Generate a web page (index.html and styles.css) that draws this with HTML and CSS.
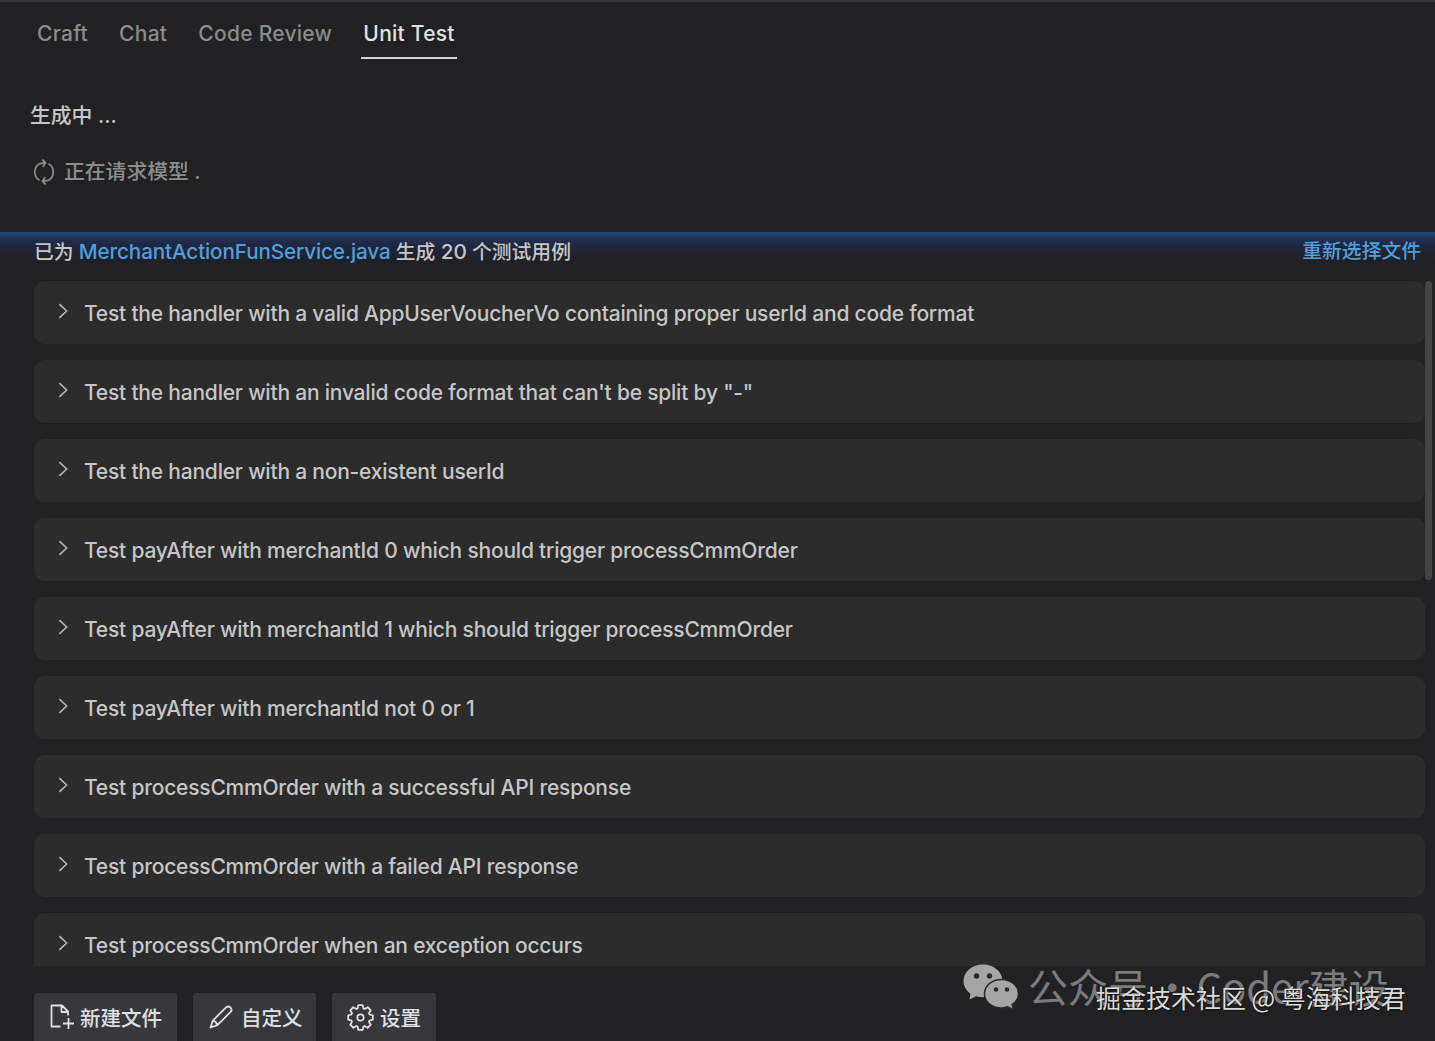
FILE: index.html
```html
<!DOCTYPE html>
<html lang="zh-CN">
<head>
    <meta charset="UTF-8">
    <meta name="viewport" content="width=device-width, initial-scale=1.0">
    <title>Unit Test</title>
    <link rel="stylesheet" href="styles.css">
</head>
<body>
    <div class="panel">
        <nav class="tabs">
            <a class="tab">Craft</a>
            <a class="tab">Chat</a>
            <a class="tab">Code Review</a>
            <a class="tab active">Unit Test</a>
        </nav>

        <div class="status">
            <div class="status-title">生成中 ...</div>
            <div class="status-step">
                <svg class="sync" width="24" height="28" viewBox="0 0 24 28">
                    <path d="M8.5 5.2A9.6 9.6 0 0 0 7.4 22.2M15.5 22.8A9.6 9.6 0 0 0 16.6 5.8M7.5 5.6L13 4.8M16.5 22.4L11 23.2M10.3 1.5L13.6 4.8L10.8 8.8M13.7 26.5L10.4 23.2L13.2 19.2"/>
                </svg>
                <span>正在请求模型 .</span>
            </div>
        </div>

        <div class="result">
            <div class="result-head">
                <div class="summary">已为 <a class="file">MerchantActionFunService.java</a> 生成 <span class="count">20</span> 个测试用例</div>
                <a class="reselect">重新选择文件</a>
            </div>
            <div class="cases">
                <div class="case"><svg class="arrow" viewBox="0 0 12 18"><path d="M1.5 1.5L9.5 9L1.5 16.5"/></svg><span>Test the handler with a valid AppUserVoucherVo containing proper userId and code format</span></div>
                <div class="case"><svg class="arrow" viewBox="0 0 12 18"><path d="M1.5 1.5L9.5 9L1.5 16.5"/></svg><span>Test the handler with an invalid code format that can't be split by "-"</span></div>
                <div class="case"><svg class="arrow" viewBox="0 0 12 18"><path d="M1.5 1.5L9.5 9L1.5 16.5"/></svg><span>Test the handler with a non-existent userId</span></div>
                <div class="case"><svg class="arrow" viewBox="0 0 12 18"><path d="M1.5 1.5L9.5 9L1.5 16.5"/></svg><span>Test payAfter with merchantId 0 which should trigger processCmmOrder</span></div>
                <div class="case"><svg class="arrow" viewBox="0 0 12 18"><path d="M1.5 1.5L9.5 9L1.5 16.5"/></svg><span>Test payAfter with merchantId 1 which should trigger processCmmOrder</span></div>
                <div class="case"><svg class="arrow" viewBox="0 0 12 18"><path d="M1.5 1.5L9.5 9L1.5 16.5"/></svg><span>Test payAfter with merchantId not 0 or 1</span></div>
                <div class="case"><svg class="arrow" viewBox="0 0 12 18"><path d="M1.5 1.5L9.5 9L1.5 16.5"/></svg><span>Test processCmmOrder with a successful API response</span></div>
                <div class="case"><svg class="arrow" viewBox="0 0 12 18"><path d="M1.5 1.5L9.5 9L1.5 16.5"/></svg><span>Test processCmmOrder with a failed API response</span></div>
                <div class="case"><svg class="arrow" viewBox="0 0 12 18"><path d="M1.5 1.5L9.5 9L1.5 16.5"/></svg><span>Test processCmmOrder when an exception occurs</span></div>
                <div class="scrollbar"></div>
            </div>
        </div>

        <div class="actions">
            <button class="btn btn-new">
                <svg width="24" height="26" viewBox="0 0 24 26"><path d="M10.5 22.5H1.5V1.5H12L18 7.5V11.5M11.5 1.5V8H18M18.5 14V25M13 19.5H24"/></svg>
                <span>新建文件</span>
            </button>
            <button class="btn btn-custom">
                <svg width="24" height="24" viewBox="0 0 24 24"><path d="M1.5 22.5L3.8 15.6L17.3 2.2Q19.3 .6 21.5 2.5Q23.5 4.7 21.8 6.7L8.4 20.2ZM3.8 15.6Q7.4 16.4 8.4 20.2"/></svg>
                <span>自定义</span>
            </button>
            <button class="btn btn-set">
                <svg width="27" height="27" viewBox="-13.5 -13.5 27 27"><path d="M-3-9L-2.2-12.3H2.2L3-9L4.24-8.49L7.14-10.25L10.25-7.14L8.49-4.24L9-3L12.3-2.2V2.2L9 3L8.49 4.24L10.25 7.14L7.14 10.25L4.24 8.49L3 9L2.2 12.3H-2.2L-3 9L-4.24 8.49L-7.14 10.25L-10.25 7.14L-8.49 4.24L-9 3L-12.3 2.2V-2.2L-9-3L-8.49-4.24L-10.25-7.14L-7.14-10.25L-4.24-8.49Z"/><circle r="3.2"/></svg>
                <span>设置</span>
            </button>
        </div>

        <div class="account">
            <svg width="56" height="46" viewBox="0 0 56 46">
                <path class="bubble" d="M20 .5C9 .5.5 7.8.5 17C.5 22 3 26.5 7.5 29.7L6.5 35.5L13 32.3C15.3 33 17.6 33.2 20 33.2C31 33.2 39.5 26 39.5 17S31 .5 20 .5Z"/>
                <path class="bubble front" d="M38.5 15.5C28.8 15.5 21.5 21.8 21.5 29.8S28.8 44 38.5 44C40.8 44 43 43.6 45 42.8L50.5 45.6L49 40.6C53 38 55.5 34.2 55.5 29.8C55.5 21.8 48 15.5 38.5 15.5Z"/>
                <g class="eyes"><circle cx="13.5" cy="12" r="2.7"/><circle cx="26.5" cy="12" r="2.7"/><circle cx="33" cy="25.5" r="2.3"/><circle cx="44" cy="25.5" r="2.3"/></g>
            </svg>
            <span>公众号 · Coder建设</span>
        </div>
        <div class="community">掘金技术社区 @ 粤海科技君</div>
    </div>
</body>
</html>
```
FILE: styles.css
```css
* {
    box-sizing: border-box;
}
body {
    margin: 0;
    background-color: #212123;
    font-family: Inter, "Noto Sans CJK SC", sans-serif;
    font-size: 21px;
    color: #c6c6c6;
}
svg {
    flex: none;
    fill: none;
    stroke: currentColor;
    stroke-width: 1.8;
    stroke-linejoin: round;
}
.panel {
    position: relative;
    display: flex;
    flex-direction: column;
    height: 1041px;
    overflow: hidden;
    border-top: 2px solid #333436;
}
.tabs {
    display: flex;
    flex: none;
    gap: 27.1px;
    height: 57px;
    padding-left: 35px;
}
.tab {
    height: 57px;
    padding: 0 2px;
    line-height: 64px;
    color: #8c8c8c;
    font-weight: 500;
    letter-spacing: .26px;
    white-space: nowrap;
}
.tab.active {
    color: #e2e2e2;
    border-bottom: 2px solid #d5d5d8;
}
.status {
    flex: none;
    height: 173px;
    padding: 42px 0 0 30px;
    font-size: 20.8px;
    font-weight: 500;
}
.status-title {
    line-height: 30px;
}
.status-step {
    display: flex;
    align-items: center;
    gap: 8px;
    margin: 26px 0 0 2px;
    line-height: 30px;
    color: #8c8c8c;
}
.result {
    display: flex;
    flex: none;
    flex-direction: column;
    height: 734px;
    background: linear-gradient(#23477f 0, #212f51 7px, #20263a 15px, #202129 27px, #212123 44px);
}
.result-head {
    display: flex;
    justify-content: space-between;
    height: 49px;
    padding: 0 14px 0 34px;
    line-height: 39px;
    font-size: 19.8px;
    font-weight: 500;
    white-space: nowrap;
}
.file,
.count {
    font-size: 20.7px;
    font-weight: 450;
}
.file {
    letter-spacing: -.14px;
}
.file,
.reselect {
    color: #4f9fdd;
}
.cases {
    position: relative;
    display: flex;
    flex-direction: column;
    gap: 16.05px;
    flex: 1;
    min-height: 0;
    padding: 0 10px 0 34px;
    overflow: hidden;
}
.case {
    display: flex;
    flex: none;
    gap: 15px;
    height: 63px;
    padding-left: 24px;
    border-radius: 11px;
    background-color: #2c2c2c;
    line-height: 65px;
    font-weight: 450;
    letter-spacing: -.21px;
    white-space: nowrap;
}
.arrow {
    width: 11px;
    height: 18px;
    margin-top: 21px;
    stroke: #b5b5b5;
}
.scrollbar {
    position: absolute;
    top: 0;
    right: 3px;
    width: 7px;
    height: 299px;
    border-radius: 3px;
    background-color: #434343;
}
.actions {
    display: flex;
    flex: none;
    gap: 16px;
    padding: 27px 0 0 34px;
}
.btn {
    display: flex;
    flex: none;
    align-items: center;
    height: 48px;
    padding: 0 0 0 16px;
    border: 0;
    border-radius: 3px 3px 0 0;
    background-color: #35393e;
    color: #e0e0e0;
    font: 500 20.5px Inter, "Noto Sans CJK SC", sans-serif;
    white-space: nowrap;
}
.btn-new {
    width: 143px;
    gap: 6px;
}
.btn-custom {
    width: 123px;
    gap: 8px;
}
.btn-set {
    width: 104px;
    padding-left: 15px;
    gap: 6px;
}
/* account marks over the lower right corner */
.account {
    position: absolute;
    left: 963px;
    top: 956px;
    display: flex;
    align-items: center;
    gap: 9px;
    color: #7b7b7b;
    font: 40px/56px "Noto Sans CJK SC", sans-serif;
    word-spacing: -4.7px;
    white-space: nowrap;
}
.account svg {
    margin-top: 2px;
}
.bubble {
    fill: #a5a5a5;
    stroke: none;
}
.bubble.front {
    stroke: #2b2b2b;
    stroke-width: 1.5;
}
.eyes {
    fill: #2b2b2b;
    stroke: none;
}
.community {
    position: absolute;
    left: 1096px;
    top: 976px;
    color: #dadada;
    font: 25px/38px "Noto Sans CJK SC", sans-serif;
    text-shadow: 1px 1px 1px #111;
    white-space: nowrap;
}
```
